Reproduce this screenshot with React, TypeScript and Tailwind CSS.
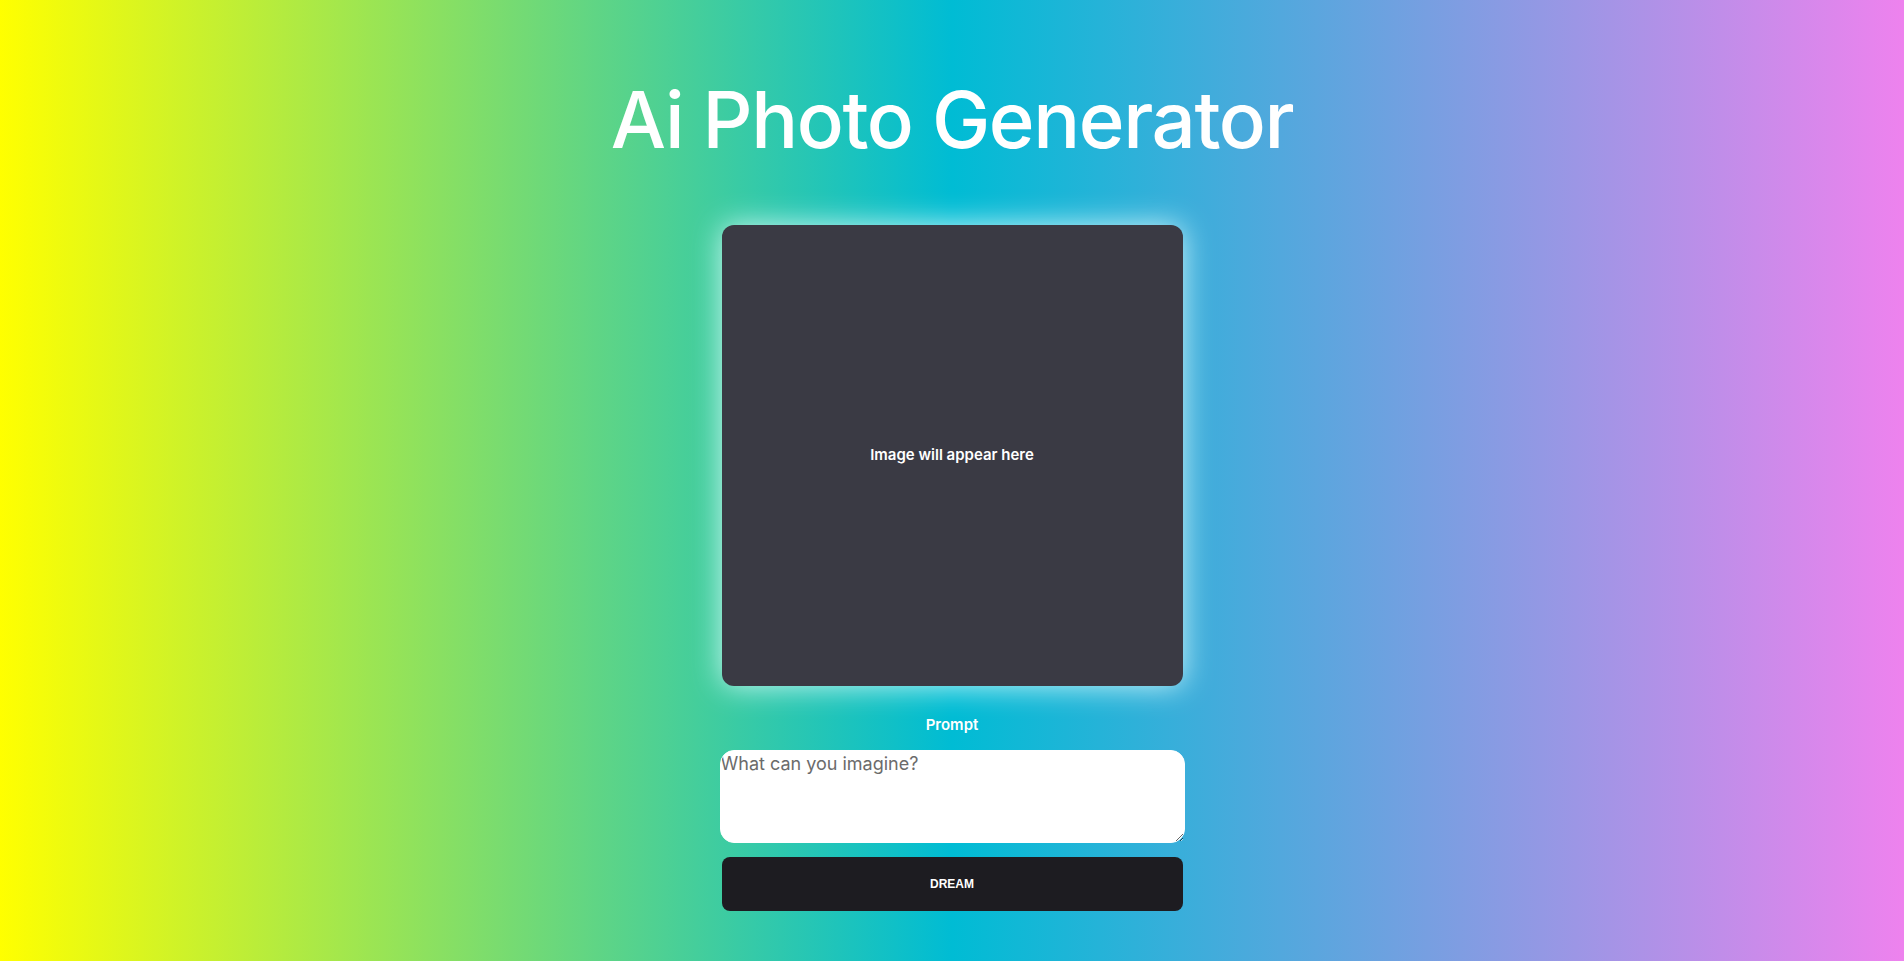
import { useState } from 'react'

export default function App() {
  const [prompt, setPrompt] = useState('')

  return (
    <div className="min-h-screen w-full bg-[linear-gradient(to_right,#ffff00,#00bcd4,#ee82ee)] font-['Inter','Noto_Sans',sans-serif]">
      <div className="flex flex-col items-center pt-[81px] pb-[48px]">
        {/* Title */}
        <h1 className="text-[78px] leading-[78px] font-medium tracking-[-1.4px] text-white">Ai Photo Generator</h1>

        {/* Image placeholder */}
        <div className="mt-[66px] flex h-[461px] w-[461px] items-center justify-center rounded-xl bg-[#3a3a44] shadow-[0_0_30px_rgba(230,255,255,0.85)]">
          <span className="text-[15px] font-semibold text-white">Image will appear here</span>
        </div>

        {/* Prompt form */}
        <label htmlFor="prompt" className="mt-[29px] text-[15px] leading-5 font-semibold text-white">
          Prompt
        </label>
        <textarea
          id="prompt"
          value={prompt}
          onChange={(e) => setPrompt(e.target.value)}
          placeholder="What can you imagine?"
          className="mt-[15px] h-[93px] w-[465px] rounded-[14px] border border-white bg-white px-0 pt-[1px] text-[18px] leading-6 text-[#333] outline-none placeholder:text-[#6b6b6b]"
        />
        <button className="mt-[14px] h-[54px] w-[461px] rounded-lg bg-[#1d1c21] font-['Liberation_Sans',Arial,sans-serif] text-[12px] font-bold text-white">
          DREAM
        </button>
      </div>
    </div>
  )
}
